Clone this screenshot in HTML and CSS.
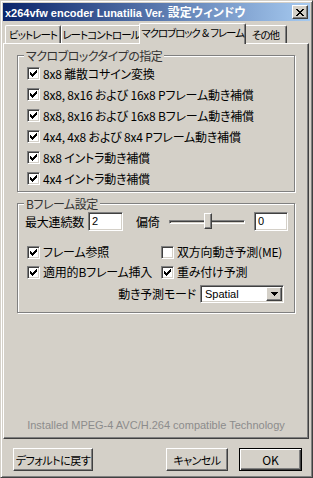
FILE: index.html
```html
<!DOCTYPE html>
<html lang="ja">
<head>
    <meta charset="UTF-8">
    <title>x264vfw encoder Lunatilia Ver. 設定ウィンドウ</title>
    <link rel="stylesheet" href="styles.css">
</head>
<body>
    <div class="window">
        <div class="titlebar">
            <span class="title">x264vfw encoder Lunatilia Ver. <span class="title-ja">設定ウィンドウ</span></span>
            <span class="close">
                <svg width="8" height="7" viewBox="0 0 8 7" shape-rendering="crispEdges"><path d="M0 0h2v1h-2z M6 0h2v1h-2z M1 1h2v1h-2z M5 1h2v1h-2z M2 2h4v1h-4z M3 3h2v1h-2z M2 4h4v1h-4z M1 5h2v1h-2z M5 5h2v1h-2z M0 6h2v1h-2z M6 6h2v1h-2z"/></svg>
            </span>
        </div>

        <div class="tabs">
            <div class="tab tab-bitrate">ビットレート</div>
            <div class="tab tab-rate">レートコントロール</div>
            <div class="tab tab-macro active">マクロブロック &amp; フレーム</div>
            <div class="tab tab-other">その他</div>
        </div>

        <div class="panel">
            <fieldset class="group group-mb">
                <legend>マクロブロックタイプの指定</legend>
                <div class="row"><span class="check"><svg width="11" height="11" viewBox="1 1 11 11" shape-rendering="crispEdges"><path d="M3 5h1v1h1v1h1v-1h1v-1h1v-1h1v-1h1v3h-1v1h-1v1h-1v1h-1v1h-1v-1h-1v-1h-1z"/></svg></span>8x8 離散コサイン変換</div>
                <div class="row"><span class="check"><svg width="11" height="11" viewBox="1 1 11 11" shape-rendering="crispEdges"><path d="M3 5h1v1h1v1h1v-1h1v-1h1v-1h1v-1h1v3h-1v1h-1v1h-1v1h-1v1h-1v-1h-1v-1h-1z"/></svg></span>8x8, 8x16 および 16x8 Pフレーム動き補償</div>
                <div class="row"><span class="check"><svg width="11" height="11" viewBox="1 1 11 11" shape-rendering="crispEdges"><path d="M3 5h1v1h1v1h1v-1h1v-1h1v-1h1v-1h1v3h-1v1h-1v1h-1v1h-1v1h-1v-1h-1v-1h-1z"/></svg></span>8x8, 8x16 および 16x8 Bフレーム動き補償</div>
                <div class="row"><span class="check"><svg width="11" height="11" viewBox="1 1 11 11" shape-rendering="crispEdges"><path d="M3 5h1v1h1v1h1v-1h1v-1h1v-1h1v-1h1v3h-1v1h-1v1h-1v1h-1v1h-1v-1h-1v-1h-1z"/></svg></span>4x4, 4x8 および 8x4 Pフレーム動き補償</div>
                <div class="row"><span class="check"><svg width="11" height="11" viewBox="1 1 11 11" shape-rendering="crispEdges"><path d="M3 5h1v1h1v1h1v-1h1v-1h1v-1h1v-1h1v3h-1v1h-1v1h-1v1h-1v1h-1v-1h-1v-1h-1z"/></svg></span>8x8 イントラ動き補償</div>
                <div class="row"><span class="check"><svg width="11" height="11" viewBox="1 1 11 11" shape-rendering="crispEdges"><path d="M3 5h1v1h1v1h1v-1h1v-1h1v-1h1v-1h1v3h-1v1h-1v1h-1v1h-1v1h-1v-1h-1v-1h-1z"/></svg></span>4x4 イントラ動き補償</div>
            </fieldset>

            <fieldset class="group group-b">
                <legend>Bフレーム設定</legend>
                <div class="row bframes">
                    <span class="field-label">最大連続数</span>
                    <span class="edit edit-count">2</span>
                    <span class="field-label bias-label">偏倚</span>
                    <span class="slider"><span class="track"></span><span class="thumb" style="left: 35px"></span></span>
                    <span class="edit edit-bias">0</span>
                </div>
                <div class="options">
                    <div class="option"><span class="check"><svg width="11" height="11" viewBox="1 1 11 11" shape-rendering="crispEdges"><path d="M3 5h1v1h1v1h1v-1h1v-1h1v-1h1v-1h1v3h-1v1h-1v1h-1v1h-1v1h-1v-1h-1v-1h-1z"/></svg></span>フレーム参照</div>
                    <div class="option"><span class="check"></span>双方向動き予測(ME)</div>
                    <div class="option"><span class="check"><svg width="11" height="11" viewBox="1 1 11 11" shape-rendering="crispEdges"><path d="M3 5h1v1h1v1h1v-1h1v-1h1v-1h1v-1h1v3h-1v1h-1v1h-1v1h-1v1h-1v-1h-1v-1h-1z"/></svg></span>適用的Bフレーム挿入</div>
                    <div class="option"><span class="check"><svg width="11" height="11" viewBox="1 1 11 11" shape-rendering="crispEdges"><path d="M3 5h1v1h1v1h1v-1h1v-1h1v-1h1v-1h1v3h-1v1h-1v1h-1v1h-1v1h-1v-1h-1v-1h-1z"/></svg></span>重み付け予測</div>
                </div>
                <div class="row mode">
                    <span>動き予測モード</span>
                    <span class="combo">
                        <span class="combo-value">Spatial</span>
                        <span class="drop"><svg width="7" height="4" viewBox="0 0 7 4" shape-rendering="crispEdges"><path d="M0 0h7v1h-1v1h-1v1h-1v1h-1v-1h-1v-1h-1v-1h-1z"/></svg></span>
                    </span>
                </div>
            </fieldset>

            <div class="credit">Installed MPEG-4 AVC/H.264 compatible Technology</div>
        </div>

        <div class="buttons">
            <button class="btn btn-reset">デフォルトに戻す</button>
            <button class="btn btn-cancel">キャンセル</button>
            <button class="btn btn-ok">OK</button>
        </div>
    </div>
</body>
</html>
```

FILE: styles.css
```css
* { margin: 0; padding: 0; box-sizing: border-box; }
body { background: #d4d0c8; font-family: "Noto Sans CJK JP", sans-serif; font-size: 12px; line-height: 14px; color: #000; font-feature-settings: "palt"; }

.window { width: 313px; height: 478px; display: flex; flex-direction: column; padding: 2px; background: #d4d0c8; border: 1px solid; border-color: #d4d0c8 #404040 #404040 #d4d0c8; box-shadow: inset 1px 1px #fff, inset -1px -1px #808080; }

.titlebar { height: 18px; display: flex; align-items: center; padding: 0 2px; background: linear-gradient(90deg, #0a246a, #a6caf0); color: #fff; }
.title { flex: 1; font-family: "Liberation Sans", "Noto Sans CJK JP", sans-serif; font-weight: bold; font-size: 11px; white-space: nowrap; }
.title-ja { font-family: "Noto Sans CJK JP", sans-serif; font-size: 12px; }
.close { width: 16px; height: 14px; display: flex; align-items: center; justify-content: center; background: #d4d0c8; border: 1px solid; border-color: #fff #404040 #404040 #fff; box-shadow: inset -1px -1px #808080; }
.close svg { display: block; }

.tabs { display: flex; align-items: flex-end; height: 20px; margin-top: 2px; padding-left: 2px; }
.tab { height: 18px; border: 1px solid; border-bottom: 0; border-color: #fff #404040 #fff #fff; border-radius: 2px 2px 0 0; box-shadow: inset -1px 0 #808080; text-align: center; font-size: 10.5px; line-height: 17px; white-space: nowrap; letter-spacing: -0.9px; word-spacing: 2px; }
.tab-bitrate { width: 56px; }
.tab-rate { width: 80px; }
.tab-macro { width: 107px; }
.tab-other { width: 43px; }
.tab.active { height: 21px; margin: 0 -2px -1px; position: relative; z-index: 1; background: #d4d0c8; line-height: 18px; letter-spacing: -1.1px; word-spacing: 1px; }

.panel { flex: 1; margin-right: 1px; display: flex; flex-direction: column; padding: 5px 13px 6px; border: 1px solid; border-color: #fff #404040 #404040 #fff; box-shadow: inset -1px -1px #808080; }

.group { border: 1px solid #808080; box-shadow: inset 1px 1px #fff, 1px 1px #fff; padding: 1px 0 2px; min-width: 0; }
.group legend { margin-left: 6px; padding: 0 2px; line-height: 13px; background: #d4d0c8; color: #333; letter-spacing: -0.5px; }
.group-b { margin-top: 5px; padding-bottom: 8px; }

.row { display: flex; align-items: center; height: 21px; padding-left: 9px; white-space: nowrap; letter-spacing: -0.2px; }
.check { width: 13px; height: 13px; margin-right: 3px; flex: none; background: #fff; border: 1px solid; border-color: #808080 #fff #fff #808080; box-shadow: inset 1px 1px #404040, inset -1px -1px #d4d0c8; }
.check svg { display: block; }

.bframes { padding-left: 7px; }
.field-label { width: 63px; flex: none; }
.bias-label { width: 33px; margin-left: 13px; }
.edit { height: 19px; flex: none; padding-left: 3px; background: #fff; border: 1px solid; border-color: #808080 #fff #fff #808080; box-shadow: inset 1px 1px #404040, inset -1px -1px #d4d0c8; font-family: "Liberation Sans", sans-serif; font-size: 11px; line-height: 16px; }
.edit-count { width: 35px; }
.edit-bias { width: 34px; margin-left: 9px; }
.slider { width: 76px; height: 21px; position: relative; flex: none; display: flex; align-items: center; }
.track { width: 100%; height: 4px; border: 1px solid; border-color: #808080 #fff #fff #808080; box-shadow: inset 1px 1px #404040; }
.thumb { position: absolute; top: 2px; width: 8px; height: 16px; background: #d4d0c8; border: 1px solid; border-color: #fff #404040 #404040 #fff; box-shadow: inset -1px -1px #808080; }

.options { display: grid; grid-template-columns: 134px auto; grid-auto-rows: 20px; margin-top: 10px; padding-left: 9px; }
.option { display: flex; align-items: center; white-space: nowrap; letter-spacing: -0.2px; }

.mode { justify-content: flex-end; height: 20px; margin-top: 2px; padding-right: 10px; }
.combo { width: 84px; height: 18px; margin-left: 4px; display: flex; align-items: center; padding: 1px; background: #fff; border: 1px solid; border-color: #808080 #fff #fff #808080; box-shadow: inset 1px 1px #404040, inset -1px -1px #d4d0c8; letter-spacing: 0; }
.combo-value { flex: 1; padding-left: 3px; font-family: "Liberation Sans", sans-serif; font-size: 11px; }
.drop { width: 16px; height: 14px; display: flex; align-items: center; justify-content: center; background: #d4d0c8; border: 1px solid; border-color: #fff #404040 #404040 #fff; box-shadow: inset -1px -1px #808080; }
.drop svg { display: block; }

.credit { margin-top: auto; text-align: center; color: #8c8c8c; font-family: "Liberation Sans", sans-serif; font-size: 11px; line-height: 14px; }

.buttons { display: flex; height: 23px; margin: 9px 0 4px; padding: 0 8px 0 10px; }
.btn { height: 23px; padding: 0; font: inherit; font-size: 11px; letter-spacing: -0.5px; white-space: nowrap; color: #000; background: #d4d0c8; border: 1px solid; border-color: #fff #404040 #404040 #fff; box-shadow: inset -1px -1px #808080; }
.btn-reset { width: 80px; }
.btn-cancel { width: 62px; margin-left: auto; }
.btn-ok { width: 63px; margin-left: 11px; font-size: 12px; letter-spacing: 0; border-color: #000; box-shadow: inset 1px 1px #fff, inset -1px -1px #404040, inset -2px -2px #808080; }
```
